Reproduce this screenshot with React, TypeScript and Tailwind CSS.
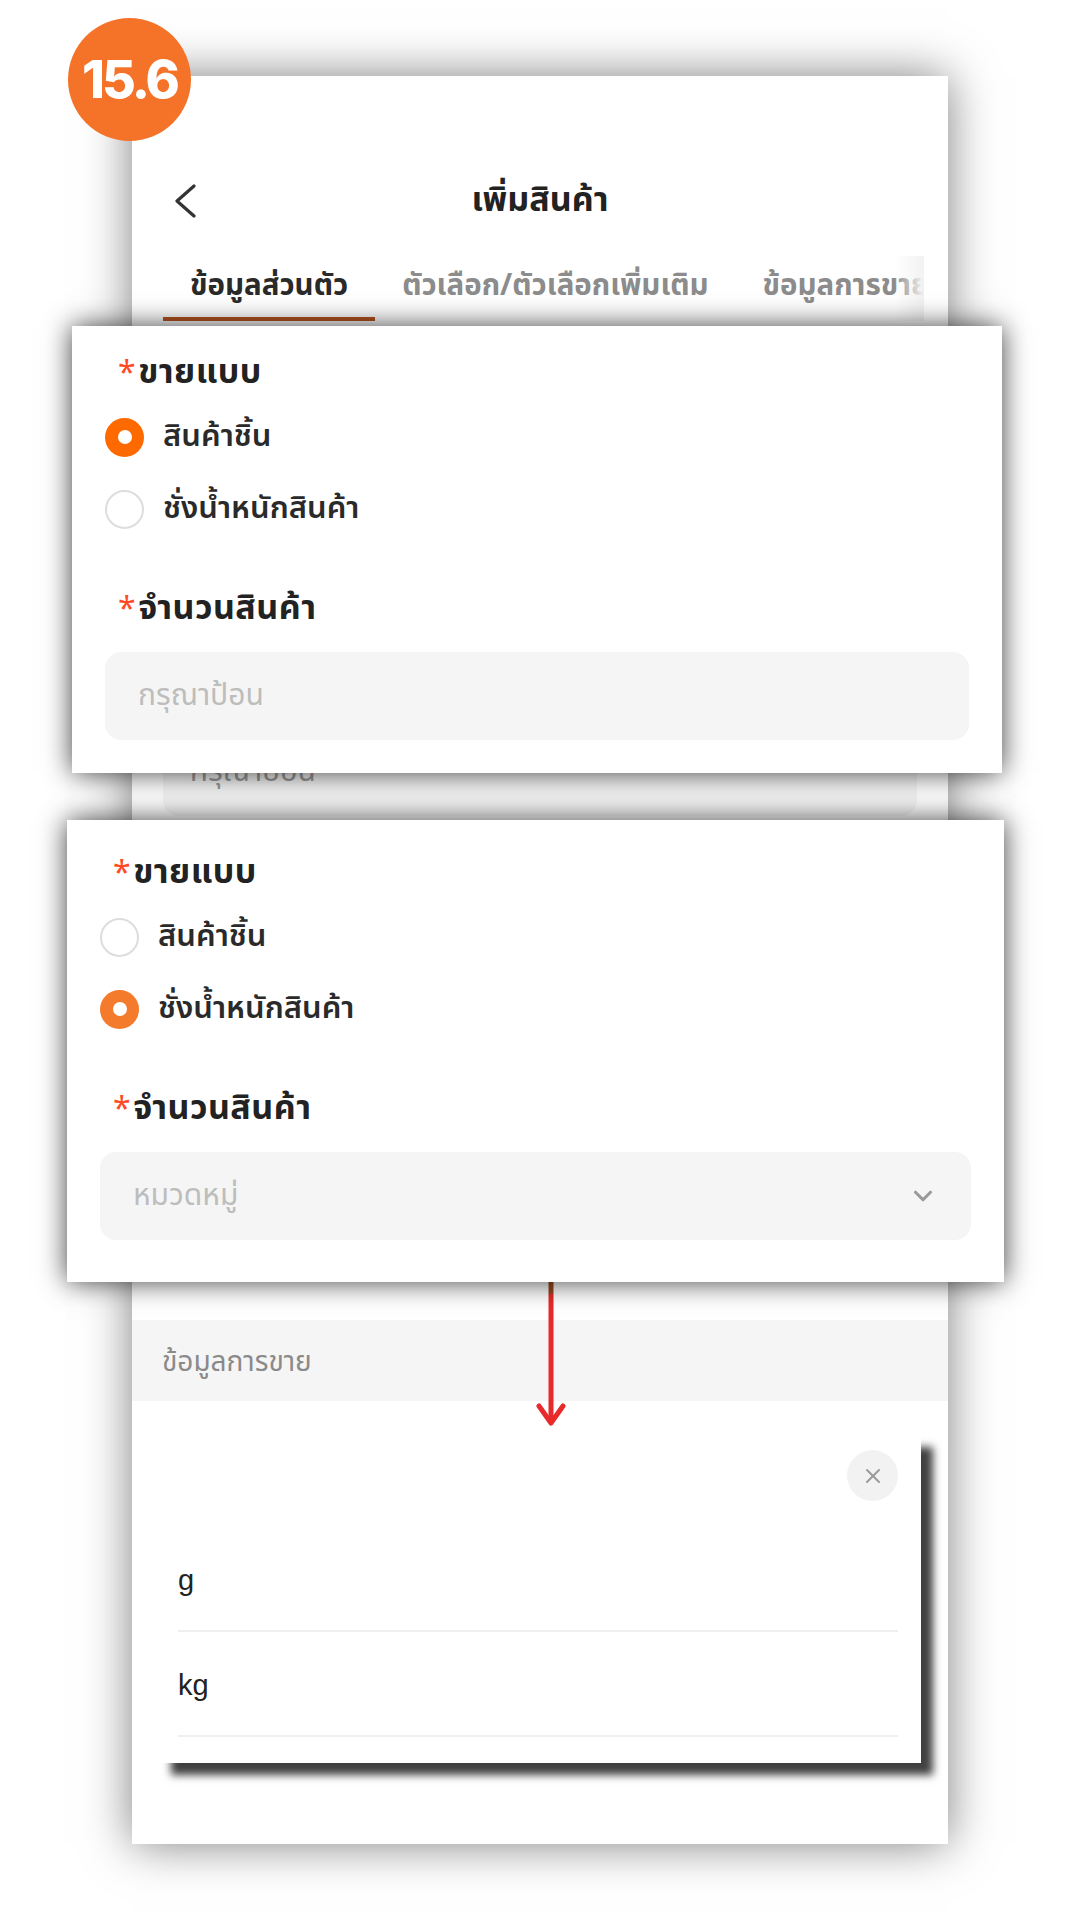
import { ChevronDown, X } from 'lucide-react';

const thai = { fontFamily: '"Noto Sans Thai", "Noto Sans", "DejaVu Sans", sans-serif' };

interface FormCardProps {
  selected: 0 | 1;
  field: 'input' | 'select';
  accent: string;
}

function Radio({ on, accent }: { on: boolean; accent: string }) {
  if (on) {
    return (
      <div className={`w-[39px] h-[39px] rounded-full flex items-center justify-center ${accent}`}>
        <div className="w-[14px] h-[14px] rounded-full bg-white" />
      </div>
    );
  }
  return <div className="w-[39px] h-[39px] rounded-full border-2 border-[#dddddd] bg-white" />;
}

function Label({ text }: { text: string }) {
  return (
    <div className="flex items-center h-[40px] text-[34px] font-bold text-[#222222] tracking-[0.5px]">
      <span className="text-[#ff4a26] text-[32px] font-normal mr-[2px] mt-[4px]">*</span>
      {text}
    </div>
  );
}

function FormCard({ selected, field, accent }: FormCardProps) {
  const options = ['สินค้าชิ้น', 'ชั่งน้ำหนักสินค้า'];
  return (
    <div className="flex flex-col h-full px-[33px] pt-[26px]" style={thai}>
      <div className="pl-[13px]">
        <Label text="ขายแบบ" />
      </div>
      <div className="flex flex-col gap-[22px] mt-[20px]">
        {options.map((o, i) => (
          <div key={o} className="flex items-center h-[50px] gap-[19px]">
            <Radio on={i === selected} accent={accent} />
            <span className="text-[31px] font-semibold text-[#2a2a2a]">{o}</span>
          </div>
        ))}
      </div>
      <div className="pl-[13px] mt-[54px]">
        <Label text="จำนวนสินค้า" />
      </div>
      <div className="mt-[24px] h-[88px] rounded-[16px] bg-[#f5f5f5] flex items-center justify-between px-[33px]">
        <span className="text-[30px] text-[#bdbdbd]">{field === 'input' ? 'กรุณาป้อน' : 'หมวดหมู่'}</span>
        {field === 'select' && <ChevronDown className="w-[30px] h-[30px] text-[#9a9a9a]" strokeWidth={2.5} />}
      </div>
    </div>
  );
}

export default function App() {
  const tabs = ['ข้อมูลส่วนตัว', 'ตัวเลือก/ตัวเลือกเพิ่มเติม', 'ข้อมูลการขาย'];

  return (
    <div className="relative w-[1080px] h-[1920px] bg-white overflow-hidden">
      {/* phone screen */}
      <div className="absolute left-[132px] top-[76px] w-[816px] h-[1768px] bg-white shadow-[0_0_45px_rgba(0,0,0,0.5)] flex flex-col" style={thai}>
        <div className="relative flex items-center justify-center h-[56px] mt-[96px]">
          <svg className="absolute left-[41px] top-[12px]" width="24" height="34" viewBox="0 0 24 34">
            <polyline points="21,2 4,17 21,32" fill="none" stroke="#333333" strokeWidth="3.2" strokeLinecap="round" strokeLinejoin="round" />
          </svg>
          <h1 className="text-[34px] font-bold text-[#222222]">เพิ่มสินค้า</h1>
        </div>

        <div className="relative mt-[28px] w-[792px] h-[65px] overflow-hidden">
          <div className="flex pl-[31px] h-full whitespace-nowrap">
            {tabs.map((t, i) => (
              <div
                key={t}
                className={`h-full flex items-center px-[27px] text-[29.5px] font-bold border-b-4 ${
                  i === 0 ? 'text-[#2a2a2a] border-[#b5541f]' : 'text-[#8c8c8c] border-transparent'
                }`}
              >
                {t}
              </div>
            ))}
          </div>
          <div className="absolute right-0 top-0 h-full w-[30px] bg-gradient-to-r from-transparent to-[#f2f2f2]" />
        </div>

        {/* form under the callouts */}
        <div className="px-[31px] mt-[407px]">
          <div className="h-[88px] rounded-[16px] bg-[#f5f5f5] flex items-center px-[27px]">
            <span className="text-[30px] text-[#9a9a9a]">กรุณาป้อน</span>
          </div>
        </div>

        <div className="mt-[504px] h-[81px] bg-[#f5f5f5] flex items-center px-[30px] pt-[4px]">
          <span className="text-[28px] text-[#8a8a8a]">ข้อมูลการขาย</span>
        </div>
      </div>

      {/* unit picker sheet */}
      <div className="absolute left-[159px] top-[1435px] w-[762px] h-[328px] bg-white shadow-[12px_12px_8px_rgba(0,0,0,0.75)] flex flex-col px-[19px] pr-[23px]">
        <div className="flex justify-end pt-[15px]">
          <div className="w-[51px] h-[51px] rounded-full bg-[#f2f2f2] flex items-center justify-center">
            <X className="w-[24px] h-[24px] text-[#9a9a9a]" strokeWidth={2} />
          </div>
        </div>
        <div className="mt-[26px] flex flex-col" style={{ fontFamily: '"Liberation Sans", Arial, sans-serif' }}>
          {['g', 'kg'].map((u) => (
            <div key={u} className="h-[105px] flex items-center border-b-2 border-[#efefef] text-[29px] text-[#222222] pt-[4px]">
              {u}
            </div>
          ))}
        </div>
      </div>

      {/* red arrow */}
      <svg className="absolute left-[535px] top-[1280px]" width="32" height="150" viewBox="0 0 32 150">
        <line x1="16" y1="2" x2="16" y2="14" stroke="#9a4a1e" strokeWidth="5" />
        <line x1="16" y1="14" x2="16" y2="143" stroke="#e82a2a" strokeWidth="5" />
        <polyline points="4,126 16,143 28,126" fill="none" stroke="#e82a2a" strokeWidth="5" strokeLinecap="round" strokeLinejoin="round" />
      </svg>

      {/* callout cards */}
      <div className="absolute left-[72px] top-[326px] w-[930px] h-[447px] bg-white shadow-[0_0_26px_rgba(0,0,0,0.75)]">
        <FormCard selected={0} field="input" accent="bg-[#ff6a00]" />
      </div>
      <div className="absolute left-[67px] top-[820px] w-[937px] h-[462px] bg-white shadow-[0_0_26px_rgba(0,0,0,0.75)]">
        <div className="h-full pt-[6px]">
          <FormCard selected={1} field="select" accent="bg-[#f47a2c]" />
        </div>
      </div>

      {/* step badge */}
      <div className="absolute left-[68px] top-[18px] w-[123px] h-[123px] rounded-full bg-[#f47329] flex items-center justify-center">
        <span className="text-white text-[52px] font-extrabold tracking-[-3px]" style={{ fontFamily: 'Inter, "Open Sans", sans-serif' }}>
          15.6
        </span>
      </div>
    </div>
  );
}
